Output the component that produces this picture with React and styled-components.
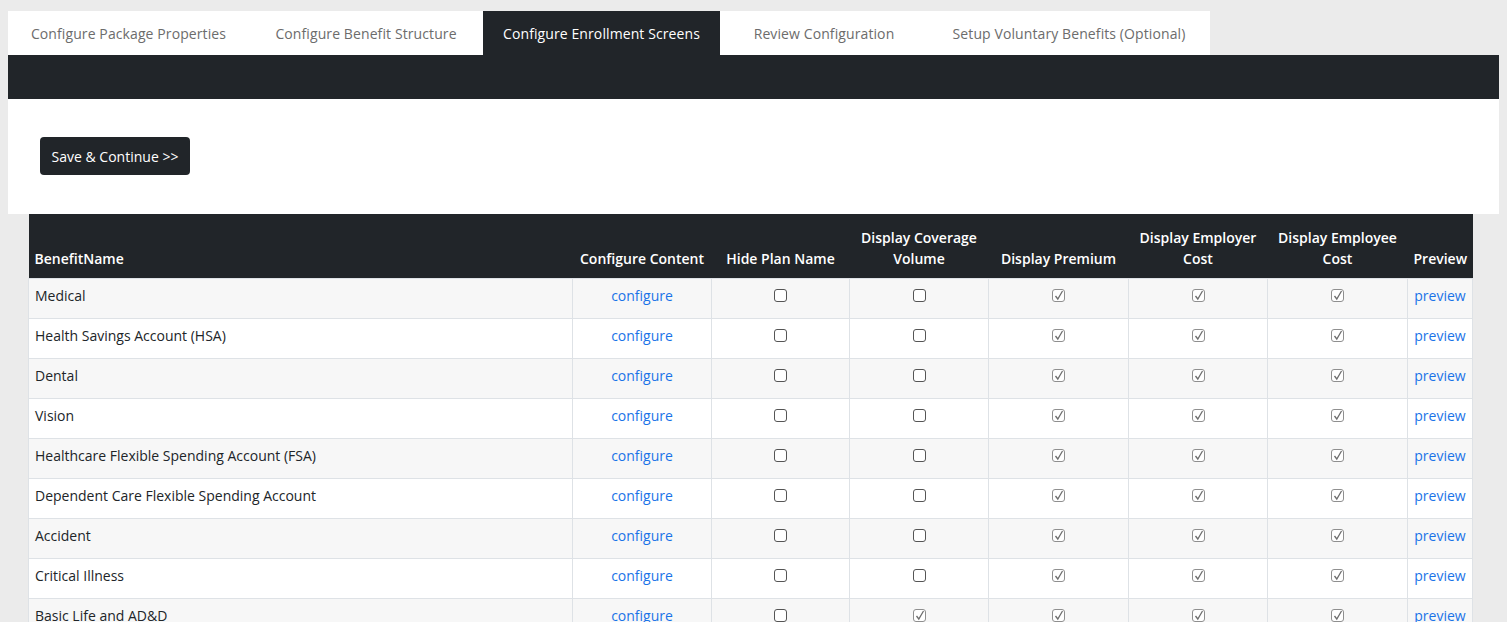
import React from "react";
import styled, { createGlobalStyle } from "styled-components";

const Global = createGlobalStyle`
  body { margin: 0; background: #ebebeb; font-family: "Open Sans", "Liberation Sans", sans-serif; font-size: 14px; color: #212529; }
`;
const Page = styled.div`padding: 11px 8px 0 8px;`;
const Tabs = styled.div`display: flex; height: 44px; width: 1202px; background: #fff;`;
const Tab = styled.div`
  display: flex; align-items: center; justify-content: center; width: ${p => p.w}px;
  background: ${p => (p.active ? "#212529" : "#fff")};
  color: ${p => (p.active ? "#fff" : "#6c6c6c")};
  font-size: 14px; letter-spacing: 0.1px;
`;
const DarkBar = styled.div`height: 44px; background: #212529;`;
const Panel = styled.div`background: #fff; height: 115px; padding: 38px 0 0 32px; box-sizing: border-box;`;
const Button = styled.button`
  background: #212529; color: #fff; border: 0; border-radius: 4px; height: 38px; width: 150px;
  font-family: inherit; font-size: 14px; cursor: pointer;
`;
const TableWrap = styled.div`padding: 0 27px 0 20px;`;
const Table = styled.table`width: 1444px; border-collapse: collapse; table-layout: fixed;`;
const Th = styled.th`
  background: #212529; color: #fff; font-weight: 600; font-size: 14px; height: 55px;
  vertical-align: bottom; padding: 0 6px 9px; text-align: ${p => p.left ? "left" : "center"}; line-height: 21px;
`;
const Tr = styled.tr`background: ${p => (p.odd ? "#f7f7f7" : "#fff")};`;
const Td = styled.td`
  height: 40px; box-sizing: border-box; border: 1px solid #dee2e6; vertical-align: top;
  padding: 7px 6px 0; text-align: ${p => p.left ? "left" : "center"}; line-height: 20px;
`;
const Link = styled.a`color: #1a73e8; text-decoration: none;`;
const Box = styled.span`
  display: inline-block; width: 13px; height: 13px; margin-top: 3px; border: 1px solid ${p => p.checked ? "#8f8f8f" : "#555"};
  border-radius: 3px; background: #fff; position: relative; box-sizing: border-box;
`;
const Check = () => (
  <svg width="13" height="13" viewBox="0 0 13 13" style={{ position: "absolute", left: -1, top: -1 }}>
    <path d="M3.5 7 L5.8 10 L10.5 2" fill="none" stroke="#6e6e6e" strokeWidth="1.3" />
  </svg>
);
const Cb = ({ c }) => <Box checked={c}>{c && <Check />}</Box>;

const rows = [
  "Medical", "Health Savings Account (HSA)", "Dental", "Vision",
  "Healthcare Flexible Spending Account (FSA)", "Dependent Care Flexible Spending Account",
  "Accident", "Critical Illness", "Basic Life and AD&D",
];

export default function App() {
  return (
    <Page>
      <Global />
      <Tabs>
        <Tab w={241}>Configure Package Properties</Tab>
        <Tab w={234}>Configure Benefit Structure</Tab>
        <Tab w={237} active>Configure Enrollment Screens</Tab>
        <Tab w={208}>Review Configuration</Tab>
        <Tab w={282}>Setup Voluntary Benefits (Optional)</Tab>
      </Tabs>
      <DarkBar />
      <Panel><Button>Save &amp; Continue &gt;&gt;</Button></Panel>
      <TableWrap>
        <Table>
          <colgroup>
            <col style={{ width: 544 }} /><col style={{ width: 139 }} /><col style={{ width: 138 }} />
            <col style={{ width: 139 }} /><col style={{ width: 140 }} /><col style={{ width: 139 }} />
            <col style={{ width: 140 }} /><col style={{ width: 65 }} />
          </colgroup>
          <thead>
            <tr>
              <Th left>BenefitName</Th>
              <Th>Configure Content</Th>
              <Th>Hide Plan Name</Th>
              <Th>Display Coverage Volume</Th>
              <Th>Display Premium</Th>
              <Th>Display Employer Cost</Th>
              <Th>Display Employee Cost</Th>
              <Th>Preview</Th>
            </tr>
          </thead>
          <tbody>
            {rows.map((r, i) => (
              <Tr key={r} odd={i % 2 === 0}>
                <Td left>{r}</Td>
                <Td><Link href="#">configure</Link></Td>
                <Td><Cb /></Td>
                <Td><Cb c={i === 8} /></Td>
                <Td><Cb c /></Td>
                <Td><Cb c /></Td>
                <Td><Cb c /></Td>
                <Td><Link href="#">preview</Link></Td>
              </Tr>
            ))}
          </tbody>
        </Table>
      </TableWrap>
    </Page>
  );
}
